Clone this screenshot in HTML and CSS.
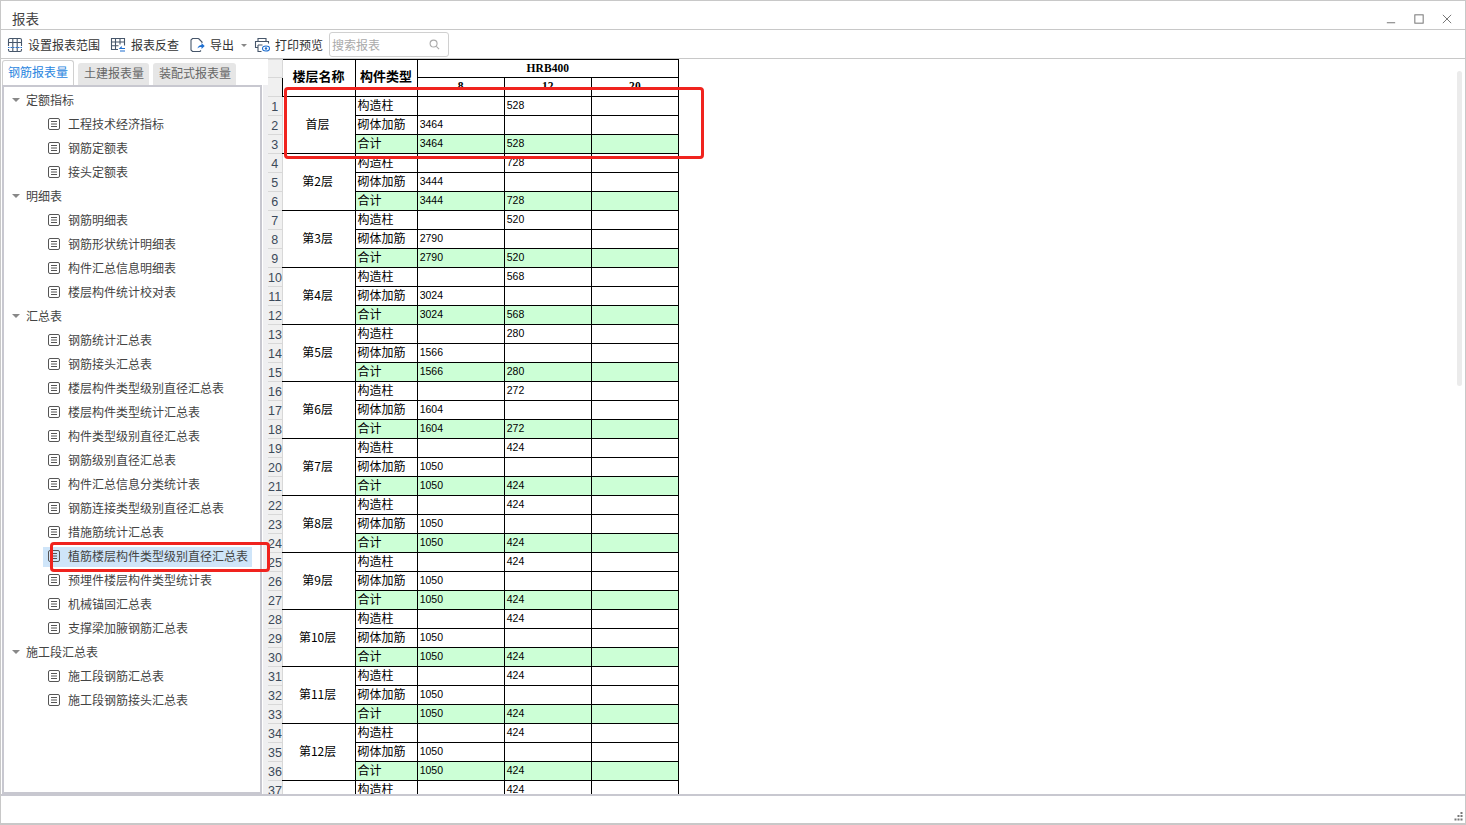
FILE: index.html
```html
<!DOCTYPE html>
<html lang="zh">
<head>
<meta charset="utf-8">
<title>报表</title>
<link rel="stylesheet" href="styles.css">
</head>
<body>
<div class="window">
  <header class="titlebar">
    <span class="title">报表</span>
    <div class="winctl">
      <svg class="wbtn" viewBox="0 0 12 12"><path d="M1 10.500h10" /></svg>
      <svg class="wbtn" viewBox="0 0 12 12"><rect x="1" y="1" width="10" height="10" /></svg>
      <svg class="wbtn" viewBox="0 0 12 12"><path d="M1 1l10 10M11 1L1 11" /></svg>
    </div>
  </header>
  <div class="toolbar">
    <div class="tool"><svg class="ticon" viewBox="0 0 16 16"><path d="M1.500 9V3a1.500 1.500 0 0 1 1.500-1.500h10A1.500 1.500 0 0 1 14.500 3v6M1.500 12v1A1.500 1.500 0 0 0 3 14.500h10a1.500 1.500 0 0 0 1.500-1.500v-1M1.500 5.500h13M5.800 1.500v13M10.200 1.500v13"/><path d="M1 10.500h14" stroke="#1f6fd0" stroke-dasharray="1.500 1"/></svg><span>设置报表范围</span></div>
    <div class="tool"><svg class="ticon" viewBox="0 0 16 16"><path d="M8 12.500H1.500v-11h13v7M1.500 5h13M1.500 8.800h7M5.500 1.500v11M10 1.500v6"/><path d="M15 11.500h-5l1.800-1.800M10 14h5" stroke="#1f6fd0"/></svg><span>报表反查</span></div>
    <div class="tool tool-export"><svg class="ticon" viewBox="0 0 16 16"><path d="M9.500 1.500H3.500l-1.500 1.500v10l1.500 1.500h7.500l1-1M9.500 1.500l3.500 3.500v1"/><path d="M8.500 11.500c.4-2.200 2-3.500 4-3.500V6l3.200 3-3.200 3v-2c-1.500 0-3 .4-4 1.500z" fill="#1f6fd0" stroke="none"/></svg><span>导出</span><i class="caret"></i></div>
    <div class="tool"><svg class="ticon" viewBox="0 0 16 16"><path d="M4 10.500H1.500v-6h13v2M4 4.500v-3h8v3M4 8h4.500M4 8v6.500h3.500"/><ellipse cx="12" cy="11.500" rx="3.500" ry="2.500" stroke="#1f6fd0"/><circle cx="12" cy="11.500" r="1.200" fill="#1f6fd0" stroke="none"/></svg><span>打印预览</span></div>
    <div class="search"><span>搜索报表</span><svg class="sicon" viewBox="0 0 12 12"><circle cx="5" cy="5" r="3.800"/><path d="M8 8l3 3"/></svg></div>
  </div>
  <main class="body">
    <aside class="side">
      <div class="tabs">
        <div class="tab active">钢筋报表量</div>
        <div class="tab">土建报表量</div>
        <div class="tab">装配式报表量</div>
      </div>
      <nav class="tree">
        <div class="group"><i class="arrow"></i>定额指标</div>
        <div class="leaf"><svg class="doc" viewBox="0 0 12 12"><rect x=".5" y=".5" width="11" height="11" rx="1.500"/><path d="M3 3.500h6M3 6h6M3 8.500h6"/></svg>工程技术经济指标</div>
        <div class="leaf"><svg class="doc" viewBox="0 0 12 12"><rect x=".5" y=".5" width="11" height="11" rx="1.500"/><path d="M3 3.500h6M3 6h6M3 8.500h6"/></svg>钢筋定额表</div>
        <div class="leaf"><svg class="doc" viewBox="0 0 12 12"><rect x=".5" y=".5" width="11" height="11" rx="1.500"/><path d="M3 3.500h6M3 6h6M3 8.500h6"/></svg>接头定额表</div>
        <div class="group"><i class="arrow"></i>明细表</div>
        <div class="leaf"><svg class="doc" viewBox="0 0 12 12"><rect x=".5" y=".5" width="11" height="11" rx="1.500"/><path d="M3 3.500h6M3 6h6M3 8.500h6"/></svg>钢筋明细表</div>
        <div class="leaf"><svg class="doc" viewBox="0 0 12 12"><rect x=".5" y=".5" width="11" height="11" rx="1.500"/><path d="M3 3.500h6M3 6h6M3 8.500h6"/></svg>钢筋形状统计明细表</div>
        <div class="leaf"><svg class="doc" viewBox="0 0 12 12"><rect x=".5" y=".5" width="11" height="11" rx="1.500"/><path d="M3 3.500h6M3 6h6M3 8.500h6"/></svg>构件汇总信息明细表</div>
        <div class="leaf"><svg class="doc" viewBox="0 0 12 12"><rect x=".5" y=".5" width="11" height="11" rx="1.500"/><path d="M3 3.500h6M3 6h6M3 8.500h6"/></svg>楼层构件统计校对表</div>
        <div class="group"><i class="arrow"></i>汇总表</div>
        <div class="leaf"><svg class="doc" viewBox="0 0 12 12"><rect x=".5" y=".5" width="11" height="11" rx="1.500"/><path d="M3 3.500h6M3 6h6M3 8.500h6"/></svg>钢筋统计汇总表</div>
        <div class="leaf"><svg class="doc" viewBox="0 0 12 12"><rect x=".5" y=".5" width="11" height="11" rx="1.500"/><path d="M3 3.500h6M3 6h6M3 8.500h6"/></svg>钢筋接头汇总表</div>
        <div class="leaf"><svg class="doc" viewBox="0 0 12 12"><rect x=".5" y=".5" width="11" height="11" rx="1.500"/><path d="M3 3.500h6M3 6h6M3 8.500h6"/></svg>楼层构件类型级别直径汇总表</div>
        <div class="leaf"><svg class="doc" viewBox="0 0 12 12"><rect x=".5" y=".5" width="11" height="11" rx="1.500"/><path d="M3 3.500h6M3 6h6M3 8.500h6"/></svg>楼层构件类型统计汇总表</div>
        <div class="leaf"><svg class="doc" viewBox="0 0 12 12"><rect x=".5" y=".5" width="11" height="11" rx="1.500"/><path d="M3 3.500h6M3 6h6M3 8.500h6"/></svg>构件类型级别直径汇总表</div>
        <div class="leaf"><svg class="doc" viewBox="0 0 12 12"><rect x=".5" y=".5" width="11" height="11" rx="1.500"/><path d="M3 3.500h6M3 6h6M3 8.500h6"/></svg>钢筋级别直径汇总表</div>
        <div class="leaf"><svg class="doc" viewBox="0 0 12 12"><rect x=".5" y=".5" width="11" height="11" rx="1.500"/><path d="M3 3.500h6M3 6h6M3 8.500h6"/></svg>构件汇总信息分类统计表</div>
        <div class="leaf"><svg class="doc" viewBox="0 0 12 12"><rect x=".5" y=".5" width="11" height="11" rx="1.500"/><path d="M3 3.500h6M3 6h6M3 8.500h6"/></svg>钢筋连接类型级别直径汇总表</div>
        <div class="leaf"><svg class="doc" viewBox="0 0 12 12"><rect x=".5" y=".5" width="11" height="11" rx="1.500"/><path d="M3 3.500h6M3 6h6M3 8.500h6"/></svg>措施筋统计汇总表</div>
        <div class="leaf selected"><svg class="doc" viewBox="0 0 12 12"><rect x=".5" y=".5" width="11" height="11" rx="1.500"/><path d="M3 3.500h6M3 6h6M3 8.500h6"/></svg>植筋楼层构件类型级别直径汇总表<b class="mark mark-tree"></b></div>
        <div class="leaf"><svg class="doc" viewBox="0 0 12 12"><rect x=".5" y=".5" width="11" height="11" rx="1.500"/><path d="M3 3.500h6M3 6h6M3 8.500h6"/></svg>预埋件楼层构件类型统计表</div>
        <div class="leaf"><svg class="doc" viewBox="0 0 12 12"><rect x=".5" y=".5" width="11" height="11" rx="1.500"/><path d="M3 3.500h6M3 6h6M3 8.500h6"/></svg>机械锚固汇总表</div>
        <div class="leaf"><svg class="doc" viewBox="0 0 12 12"><rect x=".5" y=".5" width="11" height="11" rx="1.500"/><path d="M3 3.500h6M3 6h6M3 8.500h6"/></svg>支撑梁加腋钢筋汇总表</div>
        <div class="group"><i class="arrow"></i>施工段汇总表</div>
        <div class="leaf"><svg class="doc" viewBox="0 0 12 12"><rect x=".5" y=".5" width="11" height="11" rx="1.500"/><path d="M3 3.500h6M3 6h6M3 8.500h6"/></svg>施工段钢筋汇总表</div>
        <div class="leaf"><svg class="doc" viewBox="0 0 12 12"><rect x=".5" y=".5" width="11" height="11" rx="1.500"/><path d="M3 3.500h6M3 6h6M3 8.500h6"/></svg>施工段钢筋接头汇总表</div>
      </nav>
    </aside>
    <section class="sheet">
      <table class="grid">
        <colgroup><col class="c0"><col class="c1"><col class="c2"><col class="c3"><col class="c3"><col class="c3"></colgroup>
        <thead>
          <tr class="h1"><th class="rn"></th><th class="hd" rowspan="2">楼层名称</th><th class="hd" rowspan="2">构件类型</th><th class="hd hrb" colspan="3">HRB400</th></tr>
          <tr class="h2"><th class="rn"></th><th class="hd num">8</th><th class="hd num">12</th><th class="hd num">20</th></tr>
        </thead>
        <tbody>
          <tr><td class="rn">1</td><td class="fl" rowspan="3">首层</td><td>构造柱</td><td></td><td class="n">528</td><td></td></tr>
          <tr><td class="rn">2</td><td>砌体加筋</td><td class="n">3464</td><td></td><td></td></tr>
          <tr class="sum"><td class="rn">3</td><td>合计</td><td class="n">3464</td><td class="n">528</td><td></td></tr>
          <tr><td class="rn">4</td><td class="fl" rowspan="3">第2层</td><td>构造柱</td><td></td><td class="n">728</td><td></td></tr>
          <tr><td class="rn">5</td><td>砌体加筋</td><td class="n">3444</td><td></td><td></td></tr>
          <tr class="sum"><td class="rn">6</td><td>合计</td><td class="n">3444</td><td class="n">728</td><td></td></tr>
          <tr><td class="rn">7</td><td class="fl" rowspan="3">第3层</td><td>构造柱</td><td></td><td class="n">520</td><td></td></tr>
          <tr><td class="rn">8</td><td>砌体加筋</td><td class="n">2790</td><td></td><td></td></tr>
          <tr class="sum"><td class="rn">9</td><td>合计</td><td class="n">2790</td><td class="n">520</td><td></td></tr>
          <tr><td class="rn">10</td><td class="fl" rowspan="3">第4层</td><td>构造柱</td><td></td><td class="n">568</td><td></td></tr>
          <tr><td class="rn">11</td><td>砌体加筋</td><td class="n">3024</td><td></td><td></td></tr>
          <tr class="sum"><td class="rn">12</td><td>合计</td><td class="n">3024</td><td class="n">568</td><td></td></tr>
          <tr><td class="rn">13</td><td class="fl" rowspan="3">第5层</td><td>构造柱</td><td></td><td class="n">280</td><td></td></tr>
          <tr><td class="rn">14</td><td>砌体加筋</td><td class="n">1566</td><td></td><td></td></tr>
          <tr class="sum"><td class="rn">15</td><td>合计</td><td class="n">1566</td><td class="n">280</td><td></td></tr>
          <tr><td class="rn">16</td><td class="fl" rowspan="3">第6层</td><td>构造柱</td><td></td><td class="n">272</td><td></td></tr>
          <tr><td class="rn">17</td><td>砌体加筋</td><td class="n">1604</td><td></td><td></td></tr>
          <tr class="sum"><td class="rn">18</td><td>合计</td><td class="n">1604</td><td class="n">272</td><td></td></tr>
          <tr><td class="rn">19</td><td class="fl" rowspan="3">第7层</td><td>构造柱</td><td></td><td class="n">424</td><td></td></tr>
          <tr><td class="rn">20</td><td>砌体加筋</td><td class="n">1050</td><td></td><td></td></tr>
          <tr class="sum"><td class="rn">21</td><td>合计</td><td class="n">1050</td><td class="n">424</td><td></td></tr>
          <tr><td class="rn">22</td><td class="fl" rowspan="3">第8层</td><td>构造柱</td><td></td><td class="n">424</td><td></td></tr>
          <tr><td class="rn">23</td><td>砌体加筋</td><td class="n">1050</td><td></td><td></td></tr>
          <tr class="sum"><td class="rn">24</td><td>合计</td><td class="n">1050</td><td class="n">424</td><td></td></tr>
          <tr><td class="rn">25</td><td class="fl" rowspan="3">第9层</td><td>构造柱</td><td></td><td class="n">424</td><td></td></tr>
          <tr><td class="rn">26</td><td>砌体加筋</td><td class="n">1050</td><td></td><td></td></tr>
          <tr class="sum"><td class="rn">27</td><td>合计</td><td class="n">1050</td><td class="n">424</td><td></td></tr>
          <tr><td class="rn">28</td><td class="fl" rowspan="3">第10层</td><td>构造柱</td><td></td><td class="n">424</td><td></td></tr>
          <tr><td class="rn">29</td><td>砌体加筋</td><td class="n">1050</td><td></td><td></td></tr>
          <tr class="sum"><td class="rn">30</td><td>合计</td><td class="n">1050</td><td class="n">424</td><td></td></tr>
          <tr><td class="rn">31</td><td class="fl" rowspan="3">第11层</td><td>构造柱</td><td></td><td class="n">424</td><td></td></tr>
          <tr><td class="rn">32</td><td>砌体加筋</td><td class="n">1050</td><td></td><td></td></tr>
          <tr class="sum"><td class="rn">33</td><td>合计</td><td class="n">1050</td><td class="n">424</td><td></td></tr>
          <tr><td class="rn">34</td><td class="fl" rowspan="3">第12层</td><td>构造柱</td><td></td><td class="n">424</td><td></td></tr>
          <tr><td class="rn">35</td><td>砌体加筋</td><td class="n">1050</td><td></td><td></td></tr>
          <tr class="sum"><td class="rn">36</td><td>合计</td><td class="n">1050</td><td class="n">424</td><td></td></tr>
          <tr><td class="rn">37</td><td class="fl"></td><td>构造柱</td><td></td><td class="n">424</td><td></td></tr>
        </tbody>
      </table>
      <b class="mark mark-table"></b>
      <div class="vscroll"></div>
    </section>
  </main>
  <footer class="status">
    <svg class="grip" viewBox="0 0 9 9"><path d="M6.500 0h2v2h-2zM3.500 3h2v2h-2zM6.500 3h2v2h-2zM.5 6.500h2v2h-2zM3.500 6.500h2v2h-2zM6.500 6.500h2v2h-2z"/></svg>
  </footer>
</div>
</body>
</html>
```
FILE: styles.css
```css
* { box-sizing: border-box; }
html, body { margin: 0; height: 100%; background: #fff; overflow: hidden; }
body { font: 12px/1 "Noto Sans CJK SC", "Liberation Sans", sans-serif; color: #333; }

.window {
  width: 1466px; height: 825px;
  display: flex; flex-direction: column;
  border-style: solid; border-color: #c8c8c8;
  border-width: 1px 1px 2px 1px;
  background: #fff;
}
.titlebar {
  height: 29px; flex: none;
  display: flex; align-items: center; justify-content: space-between;
  padding: 8px 13px 0 11px;
  border-bottom: 1px solid #c8c8c8;
}
.title { font-size: 13.500px; color: #444; }
.winctl { display: flex; gap: 18px; margin-top: -1px; }
.wbtn { width: 10px; height: 10px; fill: none; stroke: #777; stroke-width: 1.200; }

.toolbar {
  height: 29px; flex: none;
  display: flex; align-items: center;
  padding: 1px 0 0 6px;
  border-bottom: 1px solid #c8c8c8;
}
.tool { display: flex; align-items: center; gap: 5px; margin-right: 10px; color: #333; }
.tool-export { margin-right: 7px; }
.ticon { width: 16px; height: 16px; fill: none; stroke: #46566a; stroke-width: 1.100; }
.caret { width: 0; height: 0; margin-left: 2px; margin-top: 2px; border: 3px solid transparent; border-top-color: #888; border-bottom-width: 0; }
.search {
  width: 120px; height: 25px; margin-left: -4px;
  display: flex; align-items: center; justify-content: space-between;
  padding: 0 8px 0 2px;
  border: 1px solid #d0d0d0; border-radius: 3px;
  color: #aaa;
}
.sicon { width: 11px; height: 11px; fill: none; stroke: #aaa; stroke-width: 1.200; }

.body { flex: 1; min-height: 0; display: flex; }

.side {
  width: 267px; flex: none; display: flex; flex-direction: column; padding: 1px 0 0 1px;
  background: linear-gradient(#efeff1, #efeff1) right 26px / 5px 100% no-repeat;
}
.tabs { height: 25px; flex: none; display: flex; gap: 4px; align-items: flex-end; }
.tab {
  height: 22px; padding: 4px 5px 0 6px;
  background: #e6e6e6; color: #666;
  border-radius: 3px 3px 0 0;
}
.tab.active {
  height: 25px; padding: 5px 5px 0;
  color: #2a86e0; background: #fff;
  border: 1px solid #d0d0d0; border-bottom: 0;
}
.tree {
  width: 260px; flex: 1; min-height: 0;
  padding: 1px 0 0 0;
  border: 2px solid #c8c8d0;
  position: relative;
  color: #444;
  background: #fff;
}
.group { height: 24px; display: flex; align-items: center; padding-left: 8px; }
.arrow { width: 0; height: 0; margin-right: 6px; border: 4px solid transparent; border-top-color: #888; border-bottom-width: 0; }
.leaf { height: 24px; display: flex; align-items: center; padding-left: 44px; position: relative; }
.doc { width: 12px; height: 12px; margin-right: 8px; fill: none; stroke: #555; stroke-width: 1; }
.leaf.selected {
  background: linear-gradient(#cfe5f9, #cfe5f9) 39px 3px / 209px 20px no-repeat;
}

.mark { position: absolute; display: block; border: 3px solid #f0231e; border-radius: 4px; pointer-events: none; z-index: 5; }
.mark-tree { left: 46px; top: -2px; width: 220px; height: 30px; }
.mark-table { left: 16px; top: 28px; width: 420px; height: 72px; }

.sheet { flex: 1; min-width: 0; position: relative; overflow: hidden; }
.grid {
  border-collapse: collapse; table-layout: fixed;
  width: 411px; margin: 0;
  color: #000;
}
.c0 { width: 14px; }
.c1 { width: 73px; }
.c2 { width: 62px; }
.c3 { width: 87px; }
.grid tr { height: 19px; }
.grid td, .grid th { border: 1px solid #000; padding: 0; overflow: hidden; white-space: nowrap; height: 19px; }
.grid td { padding-left: 2px; font-size: 12px; line-height: 16px; vertical-align: top; }
.grid td.n { font: 10.500px/16px "Liberation Sans", sans-serif; padding-left: 2px; }
.grid .rn {
  background: #f0f0f0; border: 1px solid #d8d8d8; border-left: 0;
  color: #3c4a5a; font: 400 12.500px/14px "Liberation Sans", sans-serif; text-align: center;
  padding: 3px 0 0; vertical-align: top;
}
.grid td.fl { border-left: 0; vertical-align: middle; text-align: center; padding: 0 2px 2px 0; }
.grid th.hd { font-weight: 700; font-size: 13px; text-align: center; vertical-align: middle; padding-bottom: 6px; }
.grid th.hrb, .grid th.num { font-family: "Liberation Serif", serif; font-size: 11.500px; letter-spacing: .1px; }
.grid th.hrb { padding-bottom: 2px; line-height: 12px; }
.grid th.num { vertical-align: top; line-height: 12px; padding: 2px 0 0; height: 19px; }
.grid .h1, .grid .h1 th { height: 18px; }
.grid .sum td { background: #ccffd6; }
.grid .sum td.rn { background: #f0f0f0; }
.vscroll { position: absolute; right: 3px; top: 12px; width: 5px; height: 315px; border-radius: 3px; background: #ebebeb; }

.status { height: 29px; flex: none; position: relative; border-top: 2px solid #c8c8d0; }
.grip { position: absolute; right: 2px; bottom: 2px; width: 9px; height: 9px; fill: #777; }
```
